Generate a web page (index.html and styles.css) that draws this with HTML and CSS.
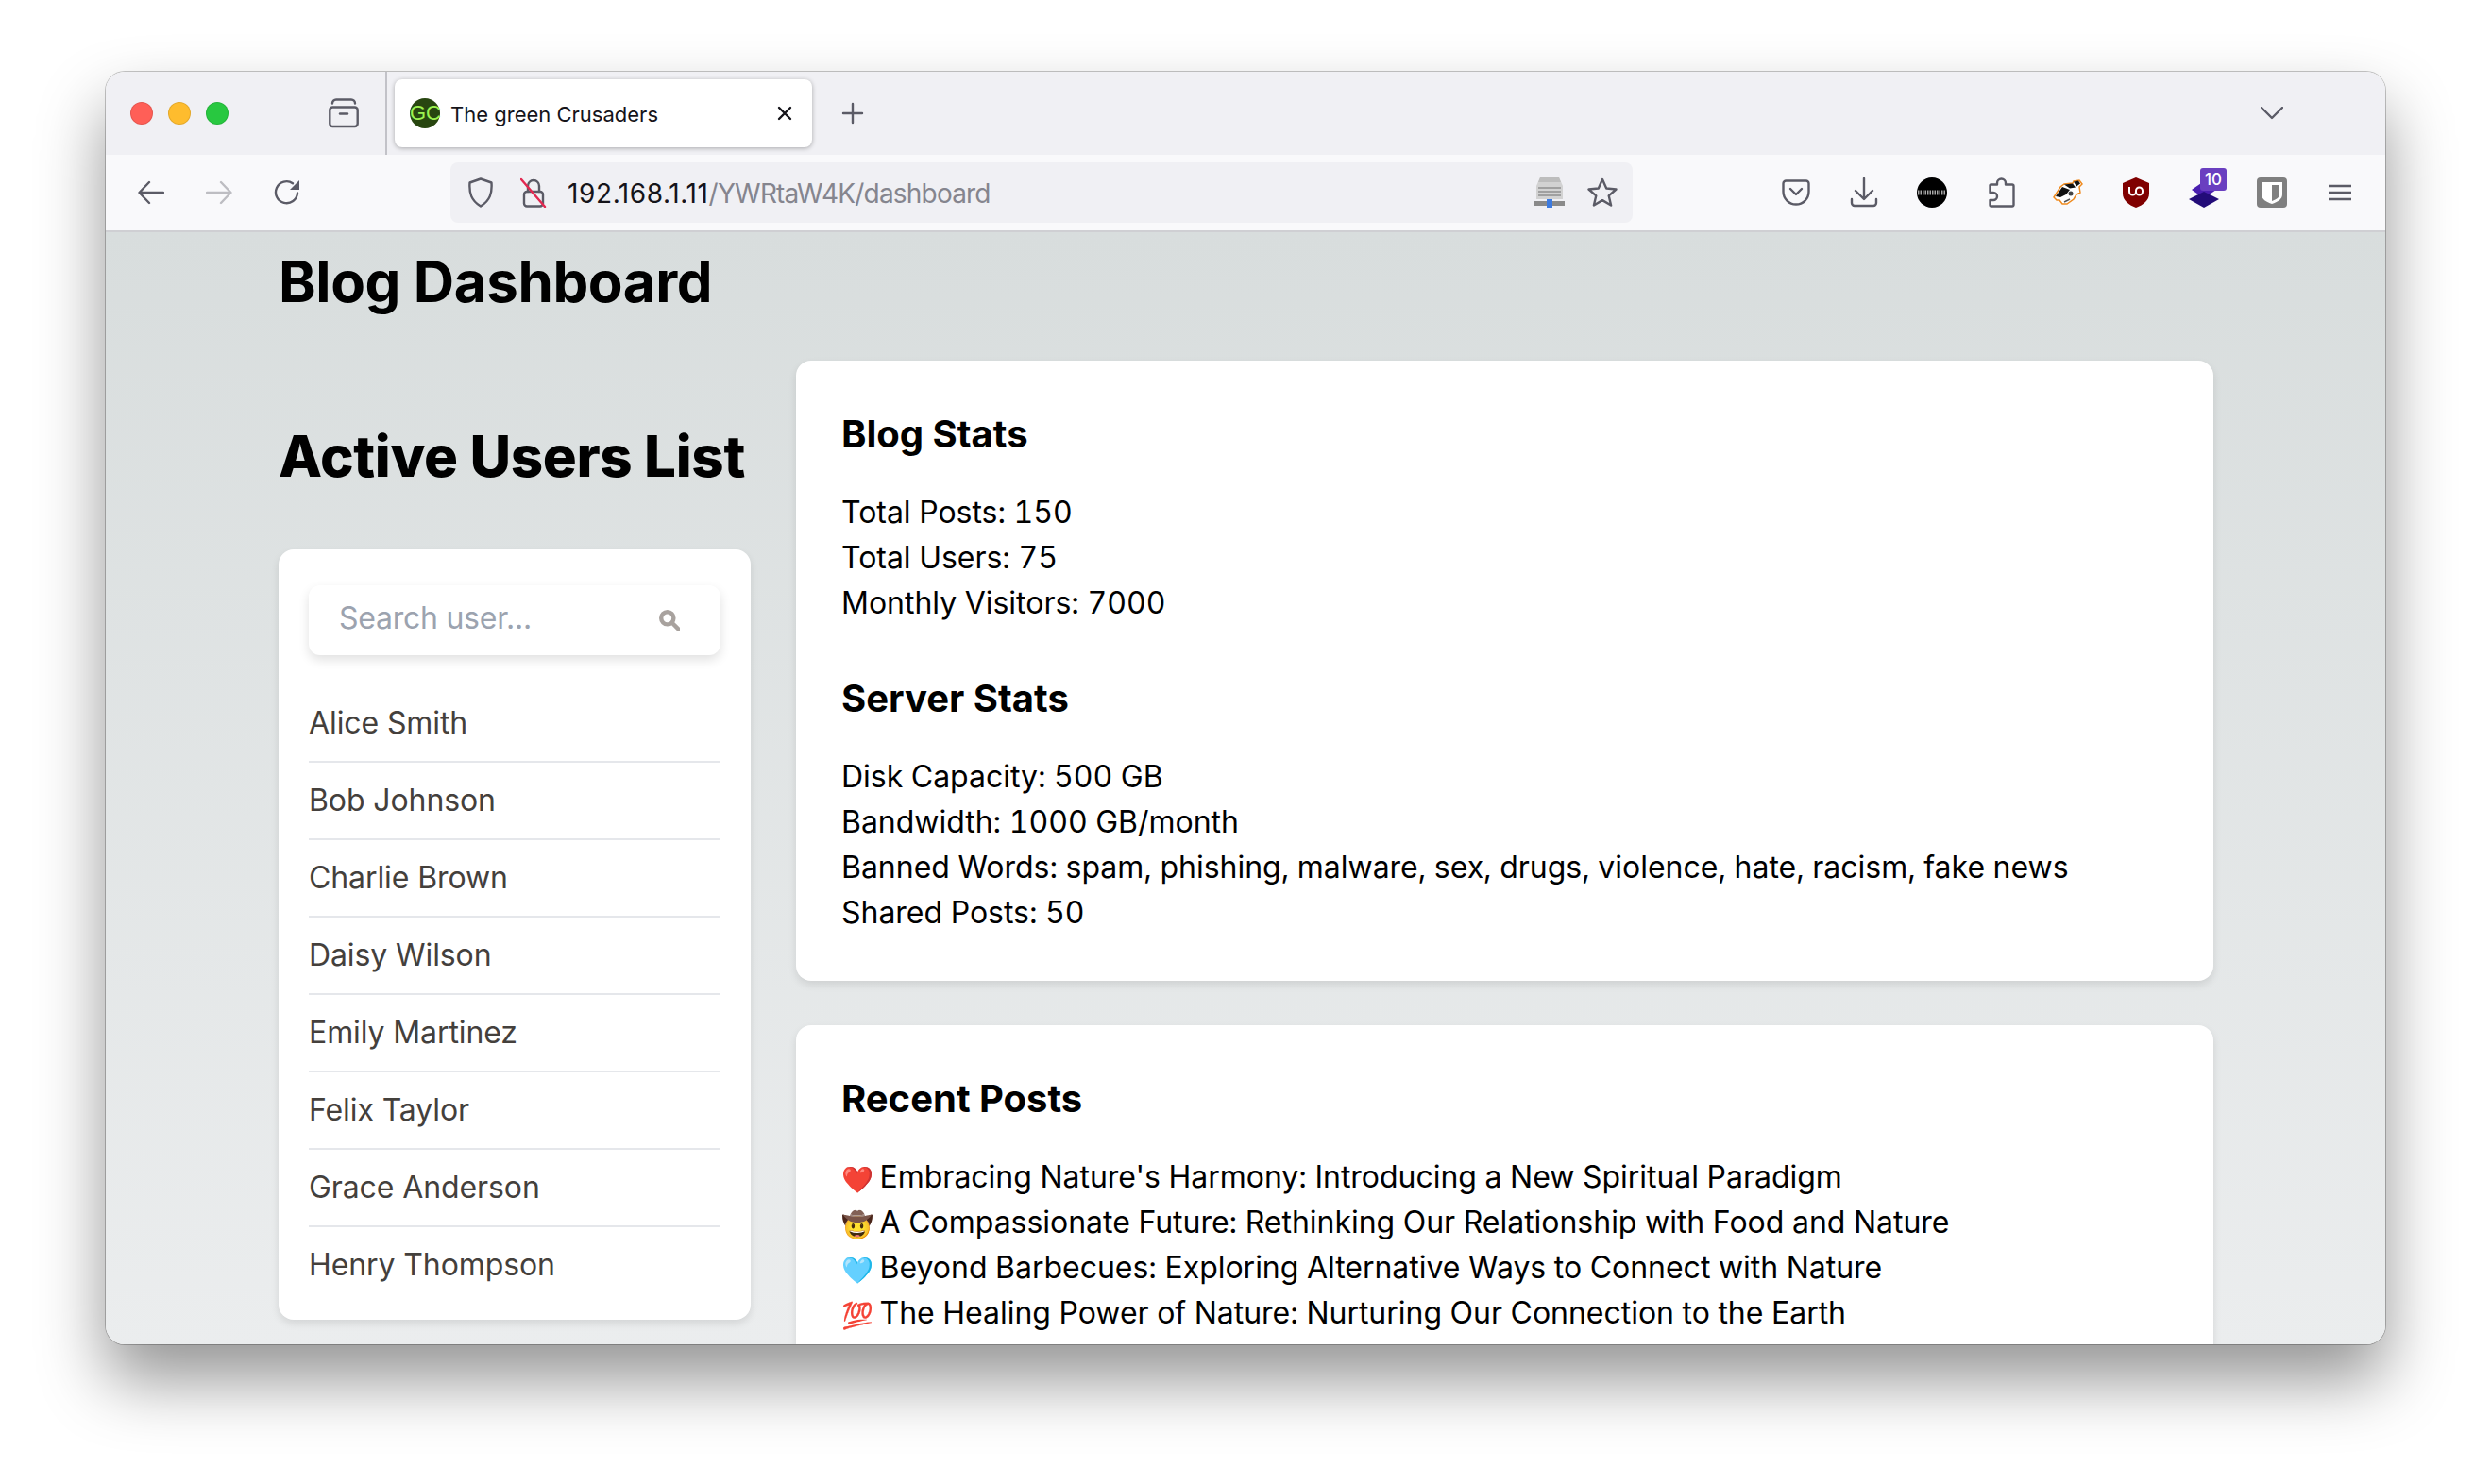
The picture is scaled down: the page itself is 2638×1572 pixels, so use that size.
FILE: index.html
```html
<!DOCTYPE html>
<html lang="en">
<head>
    <meta charset="UTF-8">
    <title>The green Crusaders</title>
    <link rel="stylesheet" href="styles.css">
</head>
<body>

<div class="window">

    <!-- Tab strip -->
    <div class="tabstrip">
        <span class="light light-red"></span>
        <span class="light light-yellow"></span>
        <span class="light light-green"></span>
        <svg class="icon view-icon" viewBox="0 0 32 32">
            <path d="M4 5.500a4 4 0 0 1 4-4h16a4 4 0 0 1 4 4"/>
            <rect x="1.300" y="9.500" width="29.400" height="20.500" rx="3"/>
            <path d="M12 16.500h8"/>
        </svg>
        <span class="tab-sep"></span>
        <div class="tab">
            <span class="favicon">GC</span>
            <span class="tab-title">The green Crusaders</span>
            <svg class="icon tab-close" viewBox="0 0 16 16"><path d="M2 2l12 12M14 2L2 14"/></svg>
        </div>
        <svg class="icon tab-plus" viewBox="0 0 24 24"><path d="M12 2v20M2 12h20"/></svg>
        <svg class="icon tab-list" viewBox="0 0 24 14"><path d="M1 1l11 11L23 1"/></svg>
    </div>

    <!-- Toolbar -->
    <div class="toolbar">
        <svg class="icon nav-icon" viewBox="0 0 28 24"><path d="M27 12H2M12 1L1.500 12 12 23"/></svg>
        <svg class="icon nav-icon nav-off" viewBox="0 0 28 24"><path d="M1 12h25M16 1l10.500 11L16 23"/></svg>
        <svg class="icon nav-icon" viewBox="0 0 28 28">
            <path d="M25 14.500A11.500 11.500 0 1 1 20 4.200"/>
            <path class="solid" d="M27 1v10H17z"/>
        </svg>

        <div class="urlbar">
            <svg class="icon shield" viewBox="0 0 28 32"><path d="M14 1.500l11.500 4c.8 11-1.500 19-11.500 25C4 24.500 1.700 16.500 2.500 5.500z"/></svg>
            <svg class="icon lock" viewBox="0 0 28 32">
                <path d="M8 15V9a6 6 0 0 1 12 0v6"/>
                <rect x="4" y="15" width="20" height="15.500" rx="3"/>
                <path class="slash" d="M1 2l25 29"/>
            </svg>
            <span class="url"><span class="url-host">192.168.1.11</span><span class="url-path">/YWRtaW4K/dashboard</span></span>
            <svg class="server" viewBox="0 0 32 32">
                <path d="M6 0h20l4 9v14H2V9z" fill="#d2d2d2"/>
                <path d="M6 0h20l2 5H4z" fill="#bdbdbd"/>
                <rect x="4" y="10" width="24" height="2" fill="#a0a0a0"/>
                <rect x="4" y="14" width="24" height="2" fill="#a0a0a0"/>
                <rect x="4" y="18" width="24" height="2" fill="#a0a0a0"/>
                <rect x="0" y="25" width="32" height="5" fill="#8a8a8a"/>
                <rect x="13" y="23" width="6" height="9" fill="#3d7be0"/>
            </svg>
            <svg class="icon star" viewBox="0 0 32 32"><path d="M16 2l4.200 9.500 10.300 1-7.800 6.800 2.400 10.200-9.100-5.400-9.100 5.400 2.400-10.200-7.800-6.800 10.300-1z"/></svg>
        </div>

        <div class="addons">
            <svg class="icon addon" viewBox="0 0 32 32">
                <path d="M5.500 3.500h21a3 3 0 0 1 3 3v8.500a13.500 13.500 0 0 1-27 0V6.500a3 3 0 0 1 3-3z"/>
                <path d="M10 12l6 6 6-6"/>
            </svg>
            <svg class="icon addon" viewBox="0 0 32 32">
                <path d="M16 1v21M7 14l9 9 9-9M3 23v4a3 3 0 0 0 3 3h20a3 3 0 0 0 3-3v-4"/>
            </svg>
            <svg class="addon" viewBox="0 0 32 32">
                <circle cx="16" cy="16" r="16" fill="#000"/>
                <path d="M1 16h30" stroke="#a8a8a8" stroke-width="5" stroke-dasharray="1.500 1"/>
            </svg>
            <svg class="icon addon" viewBox="0 0 32 32">
                <path d="M5 7.500h7V6a4.500 4.500 0 0 1 9 0v1.500h7a1.500 1.500 0 0 1 1.500 1.500v20a1.500 1.500 0 0 1-1.500 1.500H6A1.500 1.500 0 0 1 4.500 29v-5H8a4 4 0 0 0 0-8H4.500V8z" transform="translate(1 0)"/>
            </svg>
            <svg class="addon" viewBox="0 0 32 32">
                <path d="M1 21L8 10l4-3 9-1 1-2 6-1 3 4-3 3 1 6-4 2-3 5-7 5-5 0-3-4-3 0z" fill="#fff" stroke="#ef8a1e" stroke-width="1.500"/>
                <path d="M3 20L10 10l8 3-4 5-6 3z" fill="#111"/>
                <path d="M12 7.500l9-1 3 4-6 1z" fill="#111"/>
                <path d="M22 4.500l5-1 2 3-4 3z" fill="#111"/>
                <circle cx="19" cy="17" r="2.500" fill="#444"/>
                <path d="M12 26l6-3" stroke="#555" stroke-width="1.500"/>
            </svg>
            <svg class="addon" viewBox="0 0 32 32">
                <path d="M16 0l14 6v11c0 7-6 12-14 15C8 29 2 24 2 17V6z" fill="#800000"/>
                <path d="M9 10v5a3.500 3.500 0 0 0 7 0v-1a3.500 3.500 0 0 1 7 0v1a3.500 3.500 0 0 1-7 0" fill="none" stroke="#fff" stroke-width="2"/>
            </svg>
            <div class="addon addon-badged">
                <svg class="layers" viewBox="0 0 32 28">
                    <path d="M16 0l13 9-13 9L3 9z" fill="#4a1fb0"/>
                    <path d="M16 11l16 8-16 9-16-9z" fill="#230c78"/>
                </svg>
                <span class="badge">10</span>
            </div>
            <svg class="addon" viewBox="0 0 32 32">
                <rect width="32" height="32" rx="4" fill="#7f7f7f"/>
                <path d="M5 5h22v13c0 5-5 8-11 10C10 26 5 23 5 18z" fill="#fff"/>
                <path d="M16 8h8v10c0 3-3 5-8 7z" fill="#7f7f7f"/>
            </svg>
            <svg class="icon addon burger" viewBox="0 0 24 18"><path d="M0 2h24M0 9h24M0 16h24"/></svg>
        </div>
    </div>

    <!-- Pagina -->
    <main class="page">
        <h1 class="page-title">Blog Dashboard</h1>
        <div class="columns">
            <section class="users">
                <h2 class="users-title">Active Users List</h2>
                <div class="card users-card">
                    <div class="search">
                        <input class="search-input" type="text" placeholder="Search user...">
                        <svg class="search-icon" viewBox="0 0 20 20">
                            <circle cx="8" cy="8" r="6"/>
                            <path d="M12.500 12.500l6 6"/>
                        </svg>
                    </div>
                    <ul class="user-list">
                        <li>Alice Smith</li>
                        <li>Bob Johnson</li>
                        <li>Charlie Brown</li>
                        <li>Daisy Wilson</li>
                        <li>Emily Martinez</li>
                        <li>Felix Taylor</li>
                        <li>Grace Anderson</li>
                        <li>Henry Thompson</li>
                    </ul>
                </div>
            </section>

            <section class="details">
                <div class="card info-card">
                    <h3>Blog Stats</h3>
                    <p>Total Posts: 150</p>
                    <p>Total Users: 75</p>
                    <p>Monthly Visitors: 7000</p>
                    <h3 class="next-title">Server Stats</h3>
                    <p>Disk Capacity: 500 GB</p>
                    <p>Bandwidth: 1000 GB/month</p>
                    <p>Banned Words: spam, phishing, malware, sex, drugs, violence, hate, racism, fake news</p>
                    <p>Shared Posts: 50</p>
                </div>
                <div class="card info-card">
                    <h3>Recent Posts</h3>
                    <p><span class="emoji">❤️</span> Embracing Nature's Harmony: Introducing a New Spiritual Paradigm</p>
                    <p><span class="emoji">🤠</span> A Compassionate Future: Rethinking Our Relationship with Food and Nature</p>
                    <p><span class="emoji">🩵</span> Beyond Barbecues: Exploring Alternative Ways to Connect with Nature</p>
                    <p><span class="emoji">💯</span> The Healing Power of Nature: Nurturing Our Connection to the Earth</p>
                </div>
            </section>
        </div>
    </main>
</div>

</body>
</html>
```

FILE: styles.css
```css
/* General */
* {
    box-sizing: border-box;
}

html, body {
    height: 100%;
}

body {
    margin: 0;
    padding: 76px 112px 148px;
    background-color: #fff;
    font-family: Inter, "Liberation Sans", sans-serif;
    color: #000;
    overflow: hidden;
}

.window {
    height: 1348px;
    border-radius: 20px;
    overflow: hidden;
    display: flex;
    flex-direction: column;
    box-shadow: 0 0 0 1px rgba(0, 0, 0, 0.22), 0 38px 70px rgba(0, 0, 0, 0.42);
}

.icon {
    fill: none;
    stroke: #5b5b66;
    stroke-width: 2.4;
    stroke-linecap: round;
    stroke-linejoin: round;
    flex-shrink: 0;
}

/* Tab strip */
.tabstrip {
    height: 88px;
    background-color: #f0f0f4;
    display: flex;
    align-items: center;
    padding: 0 108px 0 26px;
    flex-shrink: 0;
}

.light {
    width: 24px;
    height: 24px;
    border-radius: 50%;
    margin-right: 16px;
    border: 1px solid rgba(0, 0, 0, 0.1);
}

.light-red { background-color: #ff5f57; }
.light-yellow { background-color: #febc2e; }
.light-green { background-color: #28c840; }

.view-icon {
    width: 32px;
    height: 32px;
    margin-left: 90px;
}

.tab-sep {
    width: 2px;
    height: 88px;
    margin-left: 28px;
    background-color: #c2c2c8;
}

.tab {
    width: 442px;
    height: 72px;
    margin-left: 8px;
    padding: 0 15px 0 16px;
    background-color: #fff;
    border-radius: 8px;
    box-shadow: 0 1px 5px rgba(0, 0, 0, 0.3);
    display: flex;
    align-items: center;
}

.favicon {
    width: 32px;
    height: 32px;
    flex-shrink: 0;
    border-radius: 50%;
    background-color: #284610;
    color: #9cf24f;
    font-family: "Liberation Sans Narrow", "Liberation Sans", sans-serif;
    font-size: 22px;
    line-height: 32px;
    text-align: center;
}

.tab-title {
    margin: 1px 0 0 11px;
    font-size: 22px;
    color: #15141a;
    flex: 1;
    white-space: nowrap;
}

.tab-close {
    width: 16px;
    height: 16px;
    stroke: #15141a;
    margin-right: 6px;
}

.tab-plus {
    width: 24px;
    height: 24px;
    margin-left: 31px;
}

.tab-list {
    width: 24px;
    height: 14px;
    margin-left: auto;
}

/* Toolbar */
.toolbar {
    height: 82px;
    background-color: #f9f9fb;
    border-bottom: 2px solid #cfcfd3;
    display: flex;
    align-items: center;
    padding-left: 34px;
    flex-shrink: 0;
}

.nav-icon {
    width: 28px;
    height: 28px;
    margin-right: 44px;
}

.nav-off {
    stroke: #bdbdc2;
}

.solid {
    fill: #5b5b66;
    stroke: none;
}

.urlbar {
    width: 1252px;
    height: 64px;
    margin-left: 115px;
    padding: 0 16px 0 18px;
    background-color: #f0f0f4;
    border-radius: 8px;
    display: flex;
    align-items: center;
}

.shield {
    width: 28px;
    height: 32px;
}

.lock {
    width: 28px;
    height: 32px;
    margin-left: 28px;
}

.slash {
    stroke: #e22850;
}

.url {
    margin: 2px 0 0 22px;
    font-size: 28px;
    flex: 1;
    white-space: nowrap;
}

.url-host {
    color: #15141a;
    letter-spacing: 0.6px;
}

.url-path {
    color: #85858e;
    letter-spacing: -0.8px;
}

.server {
    width: 32px;
    height: 32px;
    flex-shrink: 0;
}

.star {
    width: 32px;
    height: 32px;
    margin-left: 24px;
}

.addons {
    display: flex;
    align-items: center;
    gap: 40px;
    margin-left: 157px;
}

.addon {
    width: 32px;
    height: 32px;
    flex-shrink: 0;
}

.addon-badged {
    position: relative;
}

.layers {
    position: absolute;
    left: 0;
    bottom: 0;
    width: 32px;
    height: 28px;
}

.badge {
    position: absolute;
    left: 12px;
    top: -10px;
    width: 28px;
    height: 24px;
    border-radius: 3px;
    background-color: #6a3fc0;
    color: #fff;
    font-size: 17px;
    font-weight: 500;
    line-height: 24px;
    text-align: center;
}

.burger {
    height: 18px;
    width: 24px;
    margin-left: 4px;
}

/* Pagina */
.page {
    flex: 1;
    padding: 22px 182px 0 183px;
    background: linear-gradient(#d8dddd, #ebedee);
    overflow: hidden;
}

.page-title {
    margin: 0 0 54px;
    font-size: 60px;
    line-height: 60px;
    font-weight: 700;
    letter-spacing: -0.4px;
}

.columns {
    display: grid;
    grid-template-columns: 500px 1fr;
    gap: 48px;
}

.users-title {
    margin: 71px 0 69px;
    font-size: 60px;
    line-height: 60px;
    font-weight: 800;
    letter-spacing: -0.35px;
    white-space: nowrap;
}

.card {
    background-color: #fff;
    border-radius: 16px;
    box-shadow: 0 4px 8px rgba(0, 0, 0, 0.1);
}

.users-card {
    padding: 38px 32px 18px;
}

.search {
    height: 74px;
    padding: 0 32px;
    background-color: #fff;
    border-radius: 12px;
    box-shadow: 0 5px 12px rgba(0, 0, 0, 0.12);
    display: flex;
    align-items: center;
}

.search-input {
    flex: 1;
    min-width: 0;
    border: none;
    outline: none;
    background: none;
    padding: 0;
    margin-bottom: 5px;
    font-family: inherit;
    font-size: 32px;
    letter-spacing: -0.25px;
}

.search-input::placeholder {
    color: #9ca3af;
    opacity: 1;
}

.search-icon {
    width: 22px;
    height: 22px;
    margin-right: 11px;
    fill: none;
    stroke: #a8a29e;
    stroke-width: 4;
    stroke-linecap: round;
    flex-shrink: 0;
}

.user-list {
    list-style: none;
    margin: 32px 0 0;
    padding: 0;
}

.user-list li {
    padding: 16px 0;
    font-size: 32px;
    line-height: 48px;
    letter-spacing: -0.1px;
    color: #44403c;
    border-bottom: 2px solid #e5e7eb;
}

.user-list li:last-child {
    border-bottom: none;
}

.info-card {
    padding: 48px;
    margin-bottom: 47px;
}

.info-card h3 {
    margin: 0 0 29px;
    font-size: 40px;
    line-height: 60px;
    font-weight: 700;
}

.info-card .next-title {
    margin-top: 47px;
}

.info-card p {
    margin: 0;
    font-size: 32px;
    line-height: 48px;
    letter-spacing: -0.02px;
    font-variant-numeric: tabular-nums;
}

.emoji {
    display: inline-block;
    font-size: 25.5px;
    line-height: 1;
    letter-spacing: 0;
    transform: scale(1.07);
    transform-origin: left center;
}
```
